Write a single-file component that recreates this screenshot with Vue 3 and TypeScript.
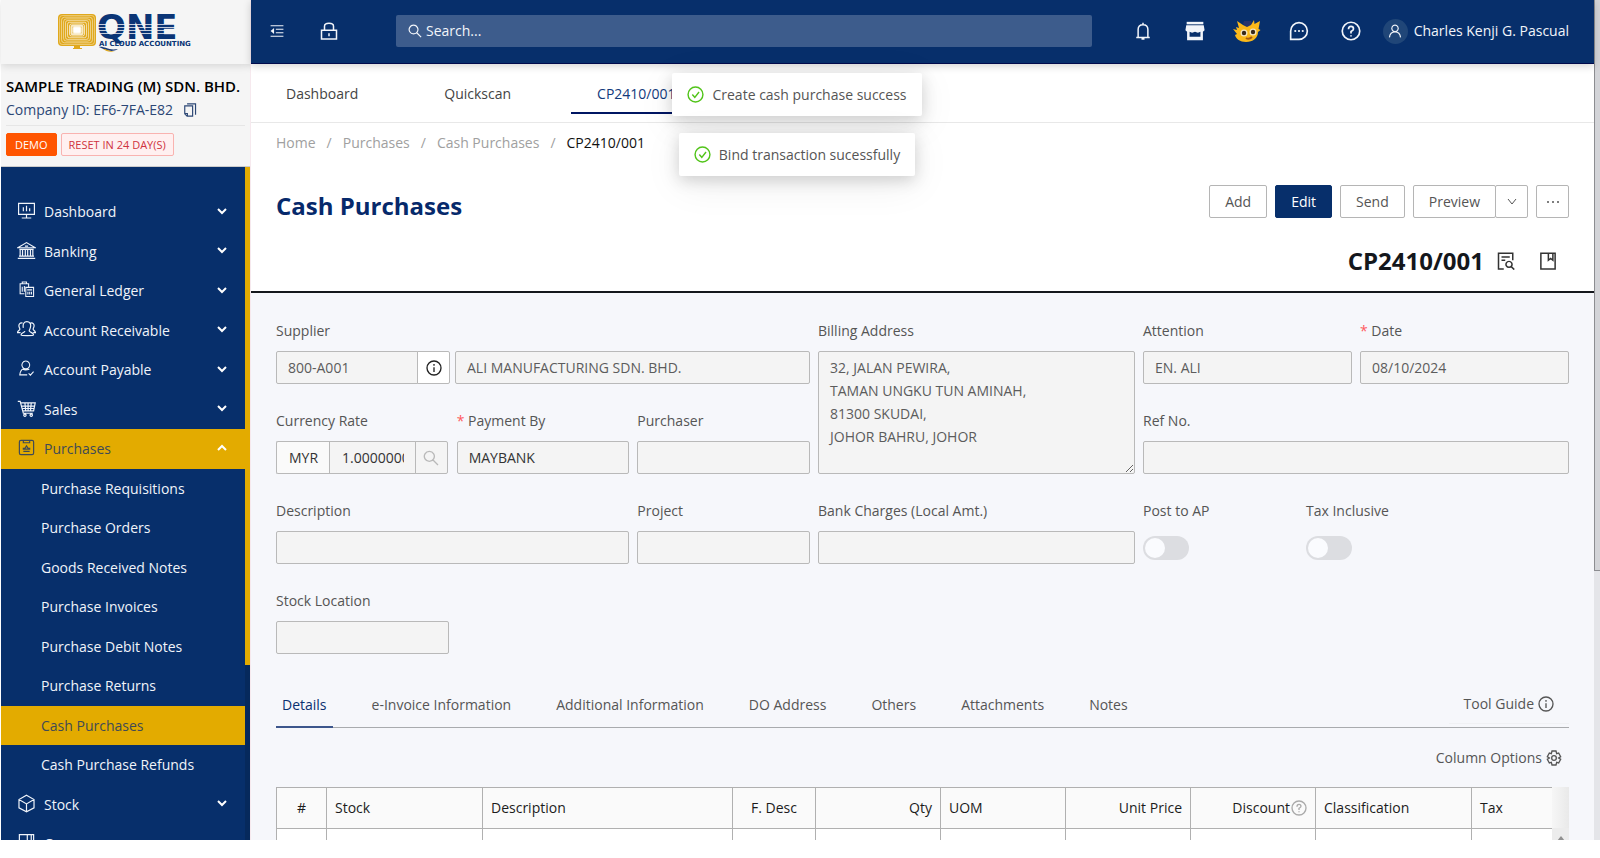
<script setup lang="ts">
import { ref } from 'vue'

interface NavRow {
  label: string
  icon?: string
  small?: boolean
  open?: boolean
  active?: boolean
}

const icons: Record<string, string> = {
  dashboard: 'M2 3h20v14H2zM12 17v4M6 21.500h12M8 8v5M12 6v7M16 9v4',
  banking: 'M1 8.500 12 2l11 6.500zM3 10.500h18M4 10.500v8M7 10.500v8M10.500 10.500v8M13.500 10.500v8M17 10.500v8M20 10.500v8M2.500 19h19M1 22h22M10 6.500h4',
  ledger: 'M9 18H3V4h12v4M6 4V1.500h6V4M6 8v7M9 7v8M11 9h11v13H11zM13 12.500h7M14 15v4M16.500 15v4M19 15v4',
  receivable: 'M8 10c-1-5 1-8 4.500-8s5.500 3 4.500 7c-.5 3-2 4-1.500 5 1 2 5 1.500 5.500 5 0 1-16 1-16 0 .5-3.500 4.500-3 5-5M7 4c-3-1-5 1-4.500 4 .3 2 1.500 3 1 4-.5 1-2.500 1-3 4h4M17 4c3-1 5 1 4.500 4-.3 2-1.500 3-1 4 .5 1 2 1 3 4h-3',
  payable: 'M11 1.500a5.500 5.500 0 1 0 .01 0M8 12c-3.500 1.500-5 4-5.500 9H13M7 13c3 2 6 1 9 0M15 19l2.500 2.500 4.500-5',
  sales: 'M1 3h3l4 15h12M5 5h18l-2 10H8M6 9h16M7 12h15M10 5l1 10M14 5v10M18 5l-1 10M10 19a1.500 1.500 0 1 0 .01 0M18 19a1.500 1.500 0 1 0 .01 0',
  purchases: 'M5 3h14q2 0 2 2v14q0 2-2 2H5q-2 0-2-2V5q0-2 2-2zM8 3v3h8V3M8 17h8M8 13h2l2-3 2 3h2v1H8z',
  stock: 'M12 1.500 21.500 7v10.500L12 22.500 2.500 17.500V7zM2.500 7 12 12.500 21.500 7M12 12.500v10',
  report: 'M3 2h18v20H3zM13 2v8h5V2',
}

const nav: NavRow[] = [
  { label: 'Dashboard', icon: 'dashboard' },
  { label: 'Banking', icon: 'banking' },
  { label: 'General Ledger', icon: 'ledger', small: true },
  { label: 'Account Receivable', icon: 'receivable' },
  { label: 'Account Payable', icon: 'payable', small: true },
  { label: 'Sales', icon: 'sales' },
  { label: 'Purchases', icon: 'purchases', open: true, active: true },
  { label: 'Purchase Requisitions' },
  { label: 'Purchase Orders' },
  { label: 'Goods Received Notes' },
  { label: 'Purchase Invoices' },
  { label: 'Purchase Debit Notes' },
  { label: 'Purchase Returns' },
  { label: 'Cash Purchases', active: true },
  { label: 'Cash Purchase Refunds' },
  { label: 'Stock', icon: 'stock' },
  { label: 'Company', icon: 'report' },
]

const tabs = ['Details', 'e-Invoice Information', 'Additional Information', 'DO Address', 'Others', 'Attachments', 'Notes']
const activeTab = ref('Details')
const crumbs = ['Home', 'Purchases', 'Cash Purchases']
const toasts = ['Create cash purchase success', 'Bind transaction sucessfully']
const address = '32, JALAN PEWIRA,\nTAMAN UNGKU TUN AMINAH,\n81300 SKUDAI,\nJOHOR BAHRU, JOHOR'

const columns = [
  { label: '#', cls: 'c-no' },
  { label: 'Stock', cls: 'c-wide' },
  { label: 'Description', cls: 'c-desc' },
  { label: 'F. Desc', cls: 'c-fdesc' },
  { label: 'Qty', cls: 'c-mid right' },
  { label: 'UOM', cls: 'c-mid' },
  { label: 'Unit Price', cls: 'c-mid right' },
  { label: 'Discount', cls: 'c-mid right', help: true },
  { label: 'Classification', cls: 'c-wide' },
  { label: 'Tax', cls: 'c-last' },
]
</script>

<template>
  <div class="shell">
    <aside class="side">
      <div class="brand">
        <svg class="logo" viewBox="0 -10 140 50" role="img" aria-label="QNE AI Cloud Accounting">
          <g fill="none" stroke="#fff" stroke-opacity=".75">
            <rect x="0" y="0" width="38" height="32" rx="4" fill="#e0a81c" stroke="none" />
            <rect x="1.500" y="1.500" width="35" height="29" rx="3" stroke-width=".5" />
            <rect x="3.500" y="3.200" width="31" height="25.600" rx="3" stroke-width=".6" />
            <rect x="5.500" y="4.900" width="27" height="22.200" rx="3" stroke-width=".6" />
            <rect x="7.500" y="6.600" width="23" height="18.800" rx="2" stroke-width=".7" />
            <rect x="9.500" y="8.300" width="19" height="15.400" rx="2" stroke-width=".8" />
            <rect x="11.500" y="10" width="15" height="12" rx="2" stroke-width=".9" />
            <rect x="13.500" y="11.700" width="11" height="8.600" rx="1" />
            <rect x="15.500" y="13.200" width="7" height="5.600" rx="1" fill="#fff" />
          </g>
          <path d="M16 32h6v2h2v1h-9v-1h1z" fill="#e0a81c" />
          <text x="39" y="25" class="logo-main">QNE</text>
          <path d="M40 10.500h98M40 13.500h98M40 16.500h98M40 19.500h98" stroke="#f5f5f5" stroke-width=".8" />
          <text x="41" y="32" class="logo-sub">AI CLOUD ACCOUNTING</text>
          <path d="M41 33c6-1 9 4 19 2-7 4-12 1-19-2z" fill="#1b3b77" />
          <path d="M45 35c5 0 6 3 12 2-5 2-9 0-12-2z" fill="#e0a81c" />
        </svg>
      </div>
      <div class="company">
        <strong class="company-name">SAMPLE TRADING (M) SDN. BHD.</strong>
        <div class="company-id">
          <span>Company ID: EF6-7FA-E82</span>
          <button class="bare" aria-label="Copy company ID">
            <svg class="i14" viewBox="0 0 24 24"><path d="M7 1.500h14.500V20M3 5h13.500v17.500H7L3 18.500zM3 18h4.500v4.500" /></svg>
          </button>
        </div>
        <div class="tags"><span class="tag demo">DEMO</span><span class="tag reset">RESET IN 24 DAY(S)</span></div>
      </div>
      <div class="nav-wrap">
        <nav class="nav">
          <ul>
            <li v-for="row in nav" :key="row.label">
              <a href="#" :class="['nav-row', { sub: !row.icon, active: row.active }]">
                <svg v-if="row.icon" :class="['nav-icon', { small: row.small }]" viewBox="0 0 24 24"><path :d="icons[row.icon]" /></svg>
                <span>{{ row.label }}</span>
                <svg v-if="row.icon" class="chev" viewBox="0 0 10 10"><path :d="row.open ? 'M1 7l4-4 4 4' : 'M1 3l4 4 4-4'" /></svg>
              </a>
            </li>
          </ul>
        </nav>
        <div class="nav-track"><div class="nav-thumb"></div></div>
      </div>
    </aside>

    <div class="page">
      <header class="top">
        <button class="bare top-btn" aria-label="Collapse menu">
          <svg class="i14" viewBox="0 0 24 24"><path d="M1 3h22M10 9h13M10 15h13M1 21h22" /><path d="M7 7v10l-6-5z" class="solid" /></svg>
        </button>
        <button class="bare top-btn" aria-label="Lock">
          <svg class="i18" viewBox="0 0 24 24"><path d="M2 11h20v11.500H2zM6 11V5.500Q6 1.500 12 1.500t6 4V11M12 15v4" /></svg>
        </button>
        <label class="search">
          <svg class="i14" viewBox="0 0 24 24"><path d="M9.500 2a7.500 7.500 0 1 0 .01 0M15 15l7.500 7.500" /></svg>
          <input type="text" placeholder="Search..." aria-label="Search" />
        </label>
        <button class="bare top-btn" aria-label="Notifications">
          <svg class="i18" viewBox="0 0 24 24"><path d="M3 20.500h18M5.500 20V10Q5.500 3.500 12 3.500T18.500 10v10M12 3.500V1M10 22.500h4" /></svg>
        </button>
        <button class="bare top-btn" aria-label="Store">
          <svg class="i20" viewBox="0 0 24 24"><path class="solid" d="M2 1h20v3H2z" /><path class="solid" d="M1.500 5h21l1 6-2 2v10h-19V13l-2-2zM5.500 13v6h13v-6l-3 1-3.500-1-3.500 1z" fill-rule="evenodd" /></svg>
        </button>
        <button class="bare top-btn" aria-label="Assistant">
          <svg class="mascot" viewBox="0 0 28 24">
            <path d="M11 2h7l1 4-5 2-4-3z" fill="#27346b" />
            <path d="M0 10l4 1-1-3 3 1-2-7 6 4 4 2 4-2 3-5 .5 4L27 2l-1.500 8 2 1-2.500 2c0 6-5 10-12 10-6 0-10-3-11-7l2-1z" fill="#fbb91a" />
            <circle cx="11" cy="14" r="3.500" fill="#f2e6c4" /><circle cx="20" cy="13" r="3.500" fill="#f2e6c4" />
            <circle cx="11" cy="14" r="2.200" fill="#3b2a1a" /><circle cx="20" cy="13" r="2.200" fill="#3b2a1a" />
            <path d="M13 19q3 2 6-1" fill="none" stroke="#a85a10" />
          </svg>
        </button>
        <button class="bare top-btn" aria-label="Messages">
          <svg class="i20" viewBox="0 0 24 24"><path d="M2 22V12A10 10 0 1 1 12 22z" /><circle class="solid" cx="7.500" cy="12" r="1.300" /><circle class="solid" cx="12" cy="12" r="1.300" /><circle class="solid" cx="16.500" cy="12" r="1.300" /></svg>
        </button>
        <button class="bare top-btn" aria-label="Help">
          <svg class="i20" viewBox="0 0 24 24"><circle cx="12" cy="12" r="10.500" /><path d="M9 10q0-3.500 3-3.500t3 3q0 1.500-3 3V15M12 17v1.500" /></svg>
        </button>
        <button class="bare user">
          <span class="avatar"><svg class="i14" viewBox="0 0 24 24"><path d="M12 2a5.500 5.500 0 1 0 .01 0M2.500 23q1-9.500 9.500-9.500t9.500 9.500" /></svg></span>
          <span>Charles Kenji G. Pascual</span>
        </button>
      </header>

      <div class="page-tabs">
        <a href="#">Dashboard</a>
        <a href="#">Quickscan</a>
        <a href="#" class="on">CP2410/001</a>
      </div>

      <div class="heading">
        <div class="crumbs">
          <template v-for="c in crumbs" :key="c"><a href="#">{{ c }}</a><span>/</span></template>
          <b>CP2410/001</b>
        </div>
        <div class="title-row">
          <h1>Cash Purchases</h1>
          <div class="actions">
            <button class="btn">Add</button>
            <button class="btn primary">Edit</button>
            <button class="btn">Send</button>
            <div class="split">
              <button class="btn">Preview</button>
              <button class="btn square" aria-label="More previews"><svg class="i10" viewBox="0 0 10 10"><path d="M1 2l4 5 4-5" /></svg></button>
            </div>
            <button class="btn square" aria-label="More actions"><svg class="i14" viewBox="0 0 14 14"><circle class="solid" cx="2" cy="7" r="1" /><circle class="solid" cx="7" cy="7" r="1" /><circle class="solid" cx="12" cy="7" r="1" /></svg></button>
          </div>
        </div>
        <div class="doc-row">
          <h2>CP2410/001</h2>
          <button class="bare" aria-label="Audit trail"><svg class="i18" viewBox="0 0 24 24"><path d="M9 22.500H2v-21h19V11M6 6.500h11M6 11h5M16 12.500a4 4 0 1 0 .01 0M19 19.500l4 4" /></svg></button>
          <button class="bare" aria-label="Bookmark"><svg class="i18" viewBox="0 0 24 24"><path d="M2.500 1.500h19v21h-19zM12.500 1.500V11l3-2.500 3 2.500V1.500" /></svg></button>
        </div>
      </div>

      <main class="body">
        <form class="form" @submit.prevent>
          <div class="stack">
            <div class="field">
              <label for="supplier">Supplier</label>
              <div class="supplier">
                <div class="joined code">
                  <input id="supplier" value="800-A001" readonly />
                  <button type="button" class="add-on white" aria-label="Supplier info"><svg class="i16" viewBox="0 0 24 24"><circle cx="12" cy="12" r="10.500" /><path d="M12 11v7M12 6v2.500" /></svg></button>
                </div>
                <input value="ALI MANUFACTURING SDN. BHD." aria-label="Supplier name" readonly />
              </div>
            </div>
            <div class="thirds">
              <div class="field">
                <label for="rate">Currency Rate</label>
                <div class="joined rate">
                  <span class="prefix">MYR</span>
                  <input id="rate" class="dark" value="1.0000000000" readonly />
                  <button type="button" class="add-on" aria-label="Find rate" disabled><svg class="i16" viewBox="0 0 24 24"><path d="M9.500 2a7.500 7.500 0 1 0 .01 0M15 15l7.500 7.500" /></svg></button>
                </div>
              </div>
              <div class="field">
                <label for="payby"><i>*</i> Payment By</label>
                <input id="payby" class="dark" value="MAYBANK" readonly />
              </div>
              <div class="field"><label for="purchaser">Purchaser</label><input id="purchaser" readonly /></div>
            </div>
            <div class="thirds">
              <div class="field two"><label for="desc">Description</label><input id="desc" readonly /></div>
              <div class="field"><label for="project">Project</label><input id="project" readonly /></div>
            </div>
            <div class="thirds">
              <div class="field"><label for="loc">Stock Location</label><input id="loc" readonly /></div>
            </div>
          </div>
          <div class="stack">
            <div class="field"><label for="bill">Billing Address</label><textarea id="bill" :value="address" readonly></textarea></div>
            <div class="field"><label for="bank">Bank Charges (Local Amt.)</label><input id="bank" readonly /></div>
          </div>
          <div class="stack">
            <div class="halves">
              <div class="field"><label for="attn">Attention</label><input id="attn" value="EN. ALI" readonly /></div>
              <div class="field"><label for="date"><i>*</i> Date</label><input id="date" value="08/10/2024" readonly /></div>
            </div>
            <div class="field"><label for="refno">Ref No.</label><input id="refno" readonly /></div>
            <div class="switches">
              <div class="field"><label for="ap">Post to AP</label><input id="ap" class="switch" type="checkbox" role="switch" disabled /></div>
              <div class="field"><label for="tax">Tax Inclusive</label><input id="tax" class="switch" type="checkbox" role="switch" disabled /></div>
            </div>
          </div>
        </form>

        <div class="tabs">
          <button v-for="t in tabs" :key="t" :class="['tab', { on: t === activeTab }]" @click="activeTab = t">{{ t }}</button>
          <button class="guide">Tool Guide <svg class="i16" viewBox="0 0 24 24"><circle cx="12" cy="12" r="10.500" /><path d="M12 11v7M12 6v2.500" /></svg></button>
        </div>
        <button class="options">Column Options
          <svg class="i16" viewBox="0 0 24 24"><path d="M9 1.500h6l1 4 3-1 3 5.500-3 2 3 2-3 5.500-3-1-1 4H9l-1-4-3 1L2 14l3-2-3-2 3-5.500 3 1z" /><circle cx="12" cy="12" r="3.500" /></svg>
        </button>
        <div class="grid">
          <table>
            <thead>
              <tr>
                <th v-for="c in columns" :key="c.label" :class="c.cls">{{ c.label }}<svg v-if="c.help" class="i16 help" viewBox="0 0 24 24"><circle cx="12" cy="12" r="10.500" /><path d="M9 10q0-3.500 3-3.500t3 3q0 1.500-3 3V15M12 17v1.500" /></svg></th>
              </tr>
            </thead>
            <tbody><tr><td v-for="c in columns" :key="c.label"></td></tr></tbody>
          </table>
          <div class="gutter"><div class="gutter-head"></div><div class="gutter-body"><svg viewBox="0 0 8 5"><path class="solid" d="M0 5l4-5 4 5z" /></svg></div></div>
        </div>
      </main>
    </div>

    <div class="page-track"><div class="page-thumb"></div></div>

    <div class="toasts">
      <div v-for="t in toasts" :key="t" class="toast" role="status">
        <svg viewBox="0 0 24 24"><circle cx="12" cy="12" r="10.500" /><path d="M7.500 12l3.500 4 6-7.500" /></svg>
        {{ t }}
      </div>
    </div>
  </div>
</template>

<style>
body { margin: 0; background: #fff; }
</style>

<style scoped>
* { box-sizing: border-box; }
.shell {
  position: relative; display: flex; height: calc(100vh - 18px); overflow: hidden;
  font: 14px/20px "Open Sans", "Noto Sans", sans-serif; color: #555;
}
a { text-decoration: none; color: inherit; }
button, input, textarea { font: inherit; color: inherit; }
svg { flex: none; fill: none; stroke: currentColor; stroke-width: 2; }
.solid { fill: currentColor; stroke: none; }
.i10 { width: 10px; height: 10px; stroke-width: 1; }
.i14 { width: 14px; height: 14px; }
.i16 { width: 16px; height: 16px; }
.i18 { width: 18px; height: 18px; }
.i20 { width: 20px; height: 20px; }
.bare { display: flex; align-items: center; justify-content: center; padding: 0; border: 0; background: none; }

.side { width: 250px; flex: none; display: flex; flex-direction: column; background: #f5f5f5; border-left: 1px solid #fff; }
.brand { height: 64px; flex: none; padding: 4px 0 0 57px; box-shadow: 0 2px 8px rgba(0, 0, 0, .13); }
.logo { display: block; width: 140px; height: 50px; stroke: none; }
.logo-main { font: bold 34px "DejaVu Sans", sans-serif; fill: #0b3576; }
.logo-sub { font: bold 7px "DejaVu Sans", sans-serif; fill: #0b3576; }
.company { flex: none; height: 103px; padding: 11px 5px 0; border-bottom: 1px solid #ccc; white-space: nowrap; }
.company-name { display: block; font-size: 15px; font-weight: 600; line-height: 22px; color: #000; }
.company-id { display: flex; gap: 10px; height: 29px; padding-top: 3px; align-items: flex-start; color: #2c4775; border-bottom: 1px solid #e6e6e6; }
.company-id button { height: 20px; }
.tags { display: flex; gap: 4px; padding-top: 7px; }
.tag { height: 23px; padding: 0 7px; border: 1px solid; border-radius: 2px; font-size: 11px; line-height: 21px; }
.demo { padding: 0 8px; background: #ff5500; border-color: #ff5500; color: #fff; }
.reset { background: #fff0f0; border-color: #f9b3b0; color: #cf3340; }
.nav-wrap { flex: 1; min-height: 0; display: flex; background: #072f6b; }
.nav { flex: 1; overflow: hidden; }
.nav ul { margin: 0; padding: 25px 0 0; list-style: none; }
.nav li { height: 40px; }
.nav li:nth-child(even) { height: 39px; }
.nav-row { display: flex; align-items: center; height: 100%; padding: 0 18px 0 16px; color: #f0f4fa; }
.nav-row span { flex: 1; padding-left: 8px; }
.nav-row.sub span { padding-left: 24px; }
.nav-row.active { background: #e3ab00; color: #3f4a56; }
.nav-icon { width: 19px; height: 19px; margin-bottom: 3px; stroke-width: 1.500; }
.nav-icon.small { width: 17px; height: 17px; margin-left: 1px; margin-right: 1px; }
.chev { width: 10px; height: 10px; margin-bottom: 3px; color: #fff; }
.nav-track { width: 5px; background: #06295c; }
.nav-thumb { height: 74%; background: #e3ab00; }

.page { flex: 1; min-width: 0; display: flex; flex-direction: column; border-left: 1px solid #f6e9ee; background: #fff; }
.top { position: relative; z-index: 1; flex: none; height: 64px; display: flex; align-items: center; padding: 0 25px 1px 0; background: #072f6b; border-bottom: 1px solid #000a4c; color: #f2f5fa; box-shadow: 0 2px 8px rgba(0, 0, 0, .18); }
.top-btn { width: 52px; height: 40px; flex: none; }
.mascot { width: 28px; height: 24px; stroke: none; }
.search { flex: 1; display: flex; align-items: center; gap: 4px; height: 32px; margin: 0 25px 0 41px; padding: 0 12px; border-radius: 2px; background: #3d5c8c; }
.search input { flex: 1; min-width: 0; padding: 0; border: 0; outline: 0; background: none; }
.search input::placeholder { color: #f2f5fa; opacity: 1; }
.user { gap: 6px; margin-left: 6px; white-space: nowrap; }
.avatar { display: flex; align-items: center; justify-content: center; width: 25px; height: 25px; border-radius: 50%; background: #204678; }

.page-tabs { flex: none; display: flex; height: 59px; padding: 10px 9px 0; border-bottom: 1px solid #e8e8e8; color: #444; }
.page-tabs a { height: 40px; padding: 0 26px; margin-right: 34px; line-height: 40px; }
.page-tabs .on { color: #123a7c; border-bottom: 2px solid #001663; }

.heading { flex: none; padding: 10px 25px 0; border-bottom: 2px solid #14171c; }
.crumbs { display: flex; gap: 11px; color: #a0a0a0; }
.crumbs b { font-weight: 400; color: #111; }
.title-row { display: flex; justify-content: space-between; margin-top: 32px; }
h1, h2 { margin: 0; font-size: 24px; line-height: 32px; font-weight: 700; }
h1 { padding-top: 5px; color: #06296b; }
.actions { display: flex; gap: 8px; }
.btn { height: 33px; padding: 0 15px; border: 1px solid #b5b5b5; border-radius: 2px; background: #fff; color: #555; }
.btn.primary { background: #072f6b; border-color: #072f6b; color: #fff; }
.btn.square { display: flex; align-items: center; justify-content: center; width: 33px; padding: 0; }
.split { display: flex; }
.split .btn + .btn { margin-left: -1px; }
.doc-row { display: flex; align-items: center; justify-content: flex-end; gap: 13px; margin-top: 23px; padding: 0 12px 14px 0; color: #333; }
.doc-row h2 { color: #14171c; }
.doc-row .bare + .bare { margin-left: 11px; }

.body { flex: 1; min-height: 0; overflow: hidden; padding: 28px 25px 0; background: #f6f7fb; }
.form { display: grid; grid-template-columns: 534fr 317fr 426fr; gap: 8px; }
.stack { display: flex; flex-direction: column; gap: 27px; min-width: 0; }
.field { min-width: 0; }
.field label { display: block; margin-bottom: 10px; white-space: nowrap; }
.field label i { font-style: normal; color: #ff5a5f; }
.field input:not(.switch), textarea { display: block; width: 100%; height: 33px; padding: 0 11px; border: 1px solid #b9b9b9; border-radius: 2px; outline: 0; background: #f4f4f4; color: #5c5c5c; }
.field input.dark { color: #333; }
textarea { height: 123px; padding: 4px 11px; line-height: 23px; resize: vertical; }
.thirds { display: grid; grid-template-columns: repeat(3, 1fr); gap: 8px; }
.thirds .two { grid-column: span 2; }
.halves { display: grid; grid-template-columns: 1fr 1fr; gap: 8px; }
.supplier { display: flex; gap: 5px; }
.code { flex: 0 0 174px; }
.joined { display: flex; }
.joined > * { flex: none; }
.field .joined input { flex: 1; width: 0; min-width: 0; border-radius: 2px 0 0 2px; }
.rate { padding-right: 1px; }
.field .rate input { border-radius: 0; padding-left: 12px; }
.prefix { height: 33px; padding: 0 11px 0 12px; border: 1px solid #b9b9b9; border-right: 0; border-radius: 2px 0 0 2px; background: #fafafa; line-height: 31px; color: #333; }
.add-on { display: flex; align-items: center; justify-content: center; width: 33px; height: 33px; margin-left: -1px; padding: 0; border: 1px solid #b9b9b9; border-radius: 0 2px 2px 0; background: #f4f4f4; color: #b9b9b9; }
.add-on.white { background: #fff; color: #222; }
.switches { display: flex; }
.switches .field { width: 163px; }
.switch { appearance: none; display: block; width: 46px; height: 24px; margin: 15px 0 0; padding: 2px; border-radius: 12px; background: #dcdde1; }
.switch::before { content: ""; display: block; width: 20px; height: 20px; border-radius: 50%; background: #fafbfe; }

.tabs { display: flex; margin-top: 29px; height: 45px; border-bottom: 1px solid #a9abae; white-space: nowrap; }
.tab { height: 45px; padding: 0 6px; margin-right: 33px; border: 0; border-bottom: 2px solid transparent; background: none; }
.tab.on { color: #0a3070; border-bottom-color: #3d568c; }
.guide, .options { display: flex; align-items: center; gap: 4px; margin-left: auto; border: 0; background: none; white-space: nowrap; }
.guide { padding: 0 15px; height: 39px; margin-top: 2px; border-bottom: 1px solid #f0f1f4; }
.options { height: 20px; margin-top: 20px; padding: 0 7px; }

.grid { display: flex; margin-top: 19px; }
table { flex: 1; min-width: 0; table-layout: fixed; border-collapse: collapse; background: #fff; color: #1c1c1c; }
th, td { border: 1px solid #b0b0b0; height: 41px; padding: 0 8px; text-align: left; font-weight: 400; white-space: nowrap; overflow: hidden; }
th { background: #fafafa; }
th:last-child, td:last-child { border-right: 0; }
.c-no { width: 50px; text-align: center; }
.c-wide { width: 156px; }
.c-desc { width: 250px; }
.c-fdesc { width: 83px; text-align: center; }
.c-mid { width: 125px; }
.right { text-align: right; }
.help { margin-left: 1px; vertical-align: -3px; color: #aaa; }
.gutter { width: 17px; }
.gutter-head { height: 41px; background: linear-gradient(90deg, #f6f6f6, #e9e9e9); }
.gutter-body { height: 42px; padding-top: 8px; background: #ececec; color: #909090; }
.gutter-body svg { display: block; width: 8px; height: 5px; margin: 0 auto; }

.page-track { width: 6px; flex: none; background: #e4e5e9; }
.page-thumb { height: 68%; background: #d3d4d8; border-left: 1px solid #8c8d91; border-bottom: 1px solid #8c8d91; }

.toasts { position: absolute; z-index: 2; top: 73px; left: 0; right: 6px; display: flex; flex-direction: column; align-items: center; gap: 17px; pointer-events: none; }
.toast { display: flex; align-items: center; gap: 8px; height: 43px; padding: 0 15px; border-radius: 2px; background: #fff; box-shadow: 0 4px 16px rgba(0, 0, 0, .17), 0 8px 40px rgba(0, 0, 0, .07); }
.toast svg { width: 17px; height: 17px; color: #52c41a; }
</style>
